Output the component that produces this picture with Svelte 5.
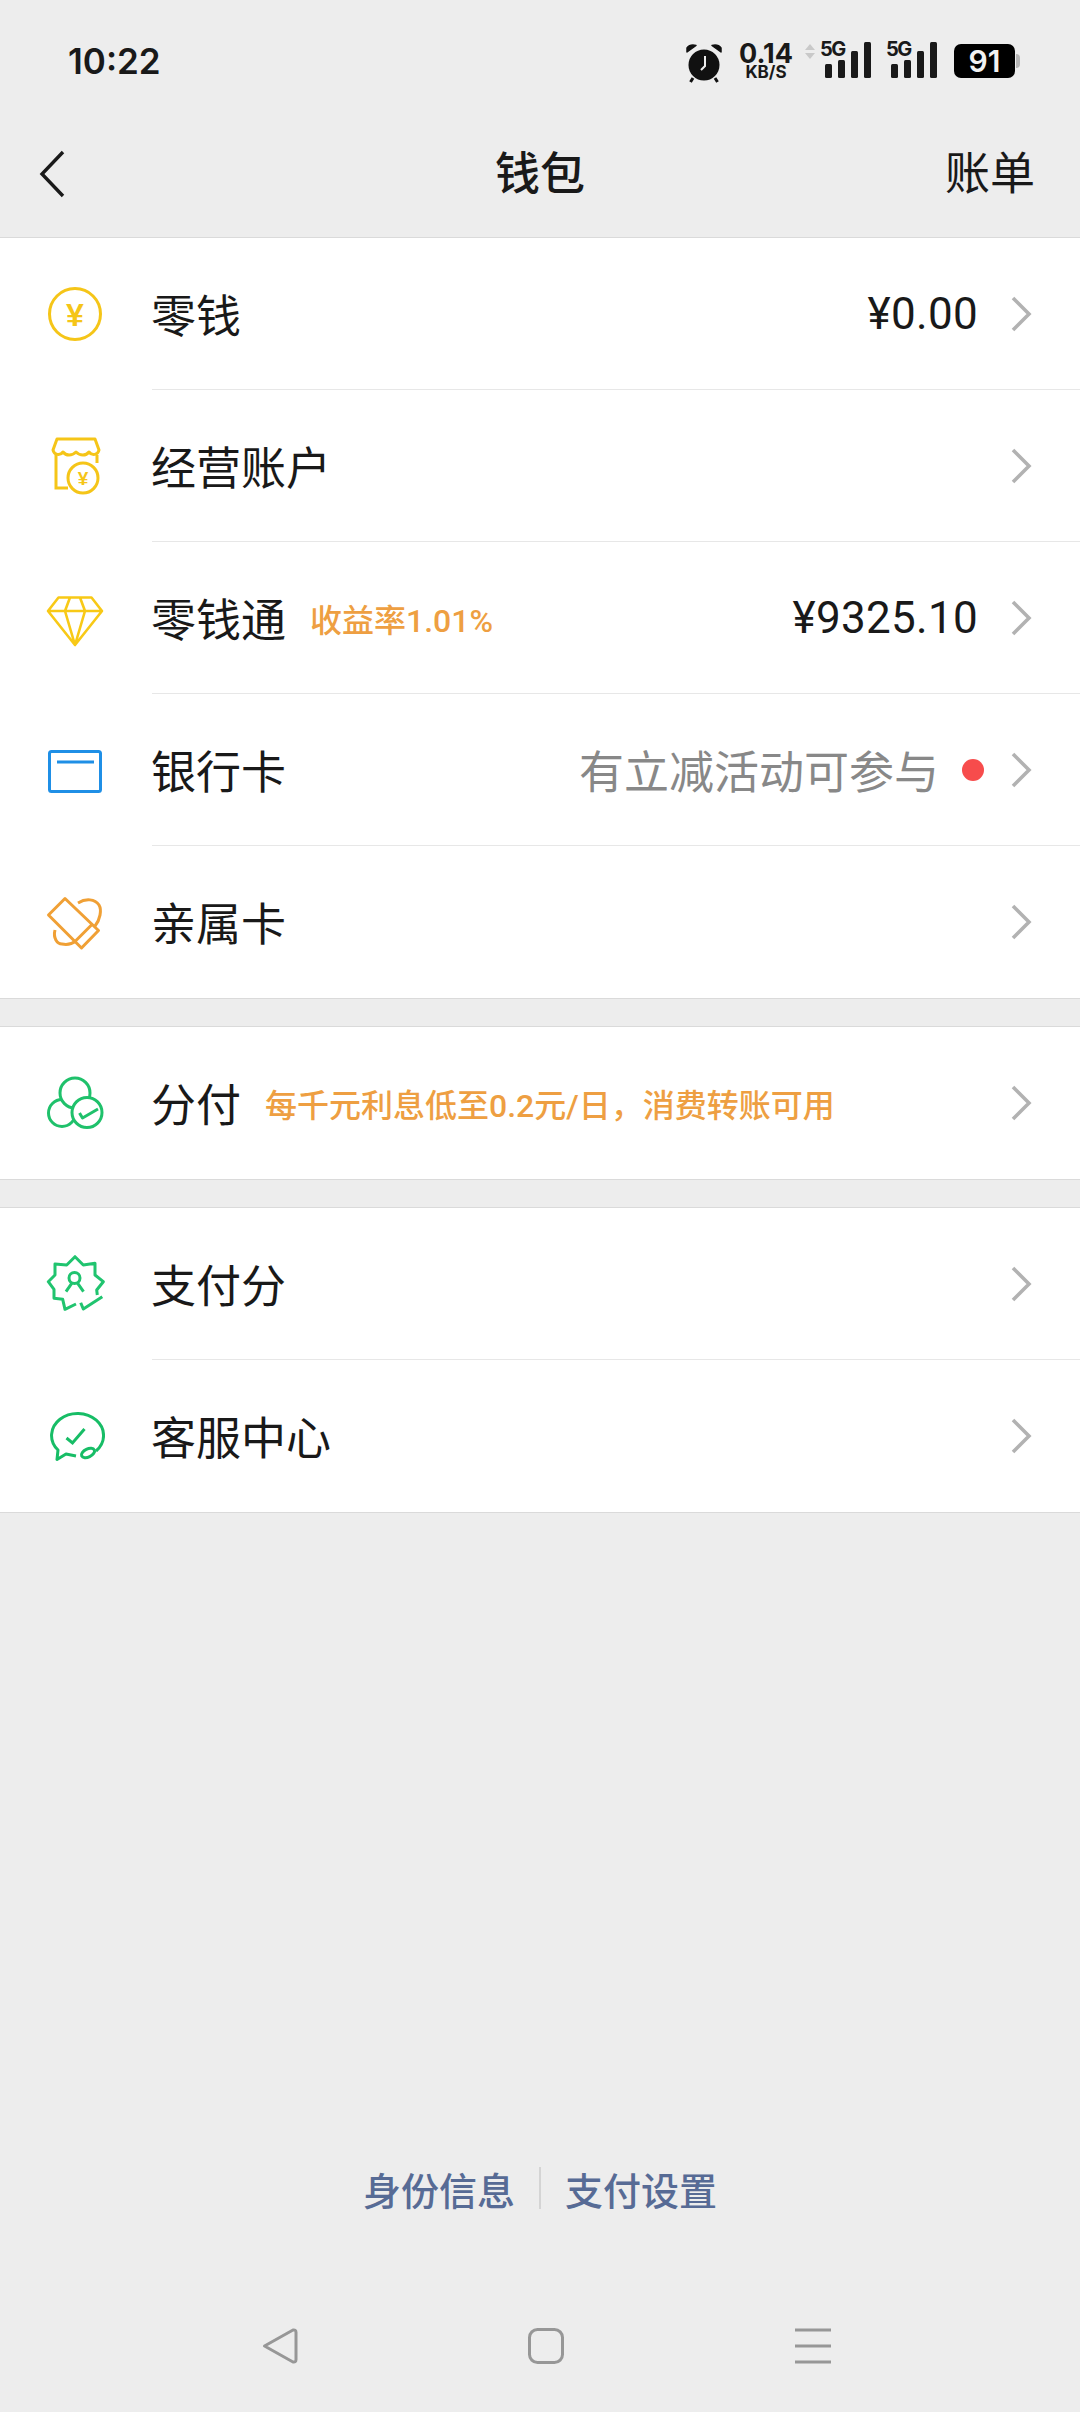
<script>
    const groups = [
        [
            { icon: 'coin', label: '零钱', value: '¥0.00' },
            { icon: 'store', label: '经营账户' },
            { icon: 'gem', label: '零钱通', tag: '收益率1.01%', value: '¥9325.10' },
            { icon: 'card', label: '银行卡', hint: '有立减活动可参与', dot: true },
            { icon: 'family', label: '亲属卡' }
        ],
        [{ icon: 'fenfu', label: '分付', tag: '每千元利息低至0.2元/日，消费转账可用' }],
        [
            { icon: 'badge', label: '支付分' },
            { icon: 'service', label: '客服中心' }
        ]
    ];

    const bars = [
        { h: 14 },
        { h: 18 },
        { h: 27 },
        { h: 36 }
    ];
</script>

<div class="page">
    <div class="status">
        <span class="time">10:22</span>
        <div class="status-right">
            <svg class="alarm" width="38" height="40" viewBox="0 0 38 40">
                <circle cx="19" cy="22" r="15.5" fill="#111" />
                <path d="M2 9 L11 2.5 Q5 1 2 5 Z M36 9 L27 2.5 Q33 1 36 5 Z" fill="#111" stroke="#111" stroke-width="1.5" stroke-linejoin="round" />
                <path d="M8 35 L5.5 39 M30 35 L32.5 39" stroke="#111" stroke-width="3" />
                <path d="M20 13 V23 L16 27" fill="none" stroke="#eee" stroke-width="2" />
            </svg>
            <div class="speed">
                <span class="speed-num">0.14</span>
                <span class="speed-unit">KB/S</span>
            </div>
            <svg class="updown" width="12" height="16" viewBox="0 0 12 16">
                <path d="M6 0 L11 6 H1 Z M6 15 L11 9 H1 Z" fill="#c9c9c9" />
            </svg>
            {#each [0, 1] as sim}
                <div class="signal" class:second={sim === 1}>
                    <span class="five-g">5G</span>
                    <div class="bars">
                        {#each bars as bar}
                            <i style="height: {bar.h}px"></i>
                        {/each}
                    </div>
                </div>
            {/each}
            <div class="battery"><span>91</span></div>
            <i class="battery-nub"></i>
        </div>
    </div>

    <header class="nav">
        <svg class="back" width="28" height="48" viewBox="0 0 28 48">
            <path d="M25 2 L4 24 L25 46" fill="none" stroke="#1a1a1a" stroke-width="3.4" />
        </svg>
        <h1>钱包</h1>
        <span class="nav-action">账单</span>
    </header>

    <main class="list">
        {#each groups as rows}
            <section class="group">
                {#each rows as row}
                    <div class="row">
                        <svg class="icon" width="60" height="60" viewBox="0 0 60 60" fill="none" stroke-width="3">
                            {#if row.icon === 'coin'}
                                <circle cx="30" cy="30" r="25.5" stroke="#f5c518" />
                                <text x="30" y="41.5" text-anchor="middle" class="yen" font-size="32" fill="#f5c518">¥</text>
                            {:else if row.icon === 'store'}
                                <path d="M12 3 H50 L54 14 C53 19 47 20 44 16 C41 20 35 20 31 16 C27 20 21 20 18 16 C15 20 9 19 8 14 Z" stroke="#f5c518" stroke-linejoin="round" />
                                <path d="M11 19 V52 H23 M52 19 V27" stroke="#f5c518" />
                                <circle cx="38" cy="42" r="15" stroke="#f5c518" />
                                <text x="38" y="49" text-anchor="middle" class="yen" font-size="19" fill="#f5c518">¥</text>
                            {:else if row.icon === 'gem'}
                                <path d="M13.5 9.5 H46.5 L57 23 L30 57 L3 23 Z M3 23 H57 M25 9.5 L20 23 L30 57 L40 23 L35 9.5" stroke="#f8c916" stroke-width="2.6" stroke-linejoin="round" />
                            {:else if row.icon === 'card'}
                                <rect x="4.5" y="11.5" width="51" height="40" rx="2" stroke="#1f8fe6" />
                                <path d="M12 22 H49" stroke="#1f8fe6" />
                            {:else if row.icon === 'family'}
                                <path d="M20 6.5 L3.5 23 L36.5 56 L53.5 38.5 Z M30 49.5 L47 32.5" stroke="#f0a035" stroke-linejoin="round" />
                                <path d="M33 11 C41 6 50 7 54 13 C57 18 55 28 50 34 M10 38 C8 46 12 52 17 52 C22 53 27 52 31 49" stroke="#f0a035" />
                            {:else if row.icon === 'fenfu'}
                                <circle cx="17" cy="40" r="13.5" stroke="#1fc16b" />
                                <circle cx="30" cy="20" r="15" stroke="#1fc16b" fill="#fff" />
                                <circle cx="42" cy="39.5" r="15" stroke="#1fc16b" fill="#fff" />
                                <path d="M34.5 40 L37.5 45 L53 36" stroke="#1fc16b" stroke-linejoin="round" />
                            {:else if row.icon === 'badge'}
                                <path d="M52.3 41 L51.7 36 L58.3 27.7 L50 21 L50 9.3 L38.3 11 L30 2.7 L21.7 11 L10 10 L10 21 L3.3 27.7 L9 35.3 L9 44.3 L17.7 45.3 L20 55.3 L31 50" stroke="#20c46f" stroke-linejoin="round" />
                                <circle cx="29.5" cy="24" r="5.5" stroke="#20c46f" />
                                <path d="M21 37.7 L26.7 29.3 M38.5 37.7 L32.7 29.3" stroke="#20c46f" />
                                <path d="M35.7 48.7 L38.3 55 L57.3 42.7" stroke="#20c46f" stroke-linejoin="round" />
                            {:else if row.icon === 'service'}
                                <path d="M31 50 L21 48 L12 53.5 L13 44 A26 22 0 1 1 51 45" stroke="#17bd66" stroke-linejoin="round" />
                                <ellipse cx="43" cy="47" rx="7" ry="4" transform="rotate(-25 43 47)" stroke="#17bd66" />
                                <path d="M21.5 32 L27.5 37 L39.5 23" stroke="#17bd66" />
                            {/if}
                        </svg>
                        <div class="row-body">
                            <span class="label">{row.label}</span>
                            {#if row.tag}
                                <span class="tag">{row.tag}</span>
                            {/if}
                            <span class="spacer"></span>
                            {#if row.hint}
                                <span class="hint">{row.hint}</span>
                            {/if}
                            {#if row.dot}
                                <i class="dot"></i>
                            {/if}
                            {#if row.value}
                                <span class="value">{row.value}</span>
                            {/if}
                            <svg class="chevron" width="22" height="36" viewBox="0 0 22 36">
                                <path d="M3 2 L19 18 L3 34" fill="none" stroke="#b2b2b2" stroke-width="3.6" />
                            </svg>
                        </div>
                    </div>
                {/each}
            </section>
        {/each}
    </main>

    <footer class="links">
        <span>身份信息</span>
        <i class="sep"></i>
        <span>支付设置</span>
    </footer>

    <div class="sysnav">
        <svg width="36" height="36" viewBox="0 0 36 36">
            <path d="M2.5 18 L31 2 Q34 1.5 34 4.5 V31.5 Q34 34.5 31 34 Z" fill="none" stroke="#979797" stroke-width="3" stroke-linejoin="round" />
        </svg>
        <svg width="36" height="36" viewBox="0 0 36 36">
            <rect x="1.5" y="1.5" width="33" height="33" rx="8" fill="none" stroke="#979797" stroke-width="3" />
        </svg>
        <svg width="38" height="36" viewBox="0 0 38 36">
            <path d="M1 2 H37 M1 18 H37 M1 34 H37" stroke="#979797" stroke-width="3" />
        </svg>
    </div>
</div>

<style>
    :global(body) {
        margin: 0;
        background: #ededed;
    }

    .page {
        width: 1080px;
        height: 2412px;
        background: #ededed;
        display: flex;
        flex-direction: column;
        font-family: "Noto Sans CJK SC", "Noto Sans", sans-serif;
        color: #191919;
        overflow: hidden;
    }

    .status {
        height: 122px;
        box-sizing: border-box;
        padding: 41px 60px 0 68px;
        display: flex;
        justify-content: space-between;
        align-items: flex-start;
    }

    .time {
        font-family: Inter, Roboto, sans-serif;
        font-size: 35px;
        font-weight: 600;
        line-height: 40px;
    }

    .status-right {
        display: flex;
        align-items: flex-start;
        font-family: Inter, Roboto, sans-serif;
    }

    .alarm {
        margin-top: 2px;
    }

    .speed {
        display: flex;
        flex-direction: column;
        align-items: center;
        width: 54px;
        margin: 1px 0 0 16px;
        font-weight: 700;
    }

    .speed-num {
        font-size: 27px;
        line-height: 23px;
    }

    .speed-unit {
        font-size: 17px;
        line-height: 15px;
    }

    .updown {
        margin: 3px 0 0 11px;
    }

    .signal {
        width: 51px;
        height: 37px;
        margin-left: 4px;
        position: relative;
    }

    .signal.second {
        margin-left: 15px;
    }

    .five-g {
        position: absolute;
        left: 0;
        top: 0;
        font-size: 20px;
        line-height: 17px;
        font-weight: 700;
        letter-spacing: -1.5px;
    }

    .bars {
        position: absolute;
        right: 0;
        bottom: 0;
        display: flex;
        align-items: flex-end;
        gap: 6px;
    }

    .bars i {
        display: block;
        width: 7px;
        background: #191919;
        border-radius: 1.5px;
    }

    .battery {
        width: 61px;
        height: 34px;
        margin: 3px 0 0 17px;
        background: #000;
        border-radius: 7px;
        display: flex;
        align-items: center;
        justify-content: center;
        color: #f2f2f2;
        font-size: 30px;
        font-weight: 600;
    }

    .battery-nub {
        display: block;
        width: 4px;
        height: 14px;
        margin: 13px 0 0 1px;
        background: #b5b5b5;
        border-radius: 0 4px 4px 0;
    }

    .nav {
        height: 116px;
        box-sizing: border-box;
        padding: 0 45px 12px 38px;
        display: grid;
        grid-template-columns: 1fr auto 1fr;
        align-items: center;
        border-bottom: 1px solid #dadada;
    }

    .nav h1 {
        margin: -5px 0 0;
        padding-left: 7px;
        font-size: 45px;
        font-weight: 500;
        line-height: 60px;
    }

    .nav-action {
        justify-self: end;
        font-size: 45px;
        line-height: 60px;
        margin-top: -5px;
    }

    .list {
        flex: 1;
        display: flex;
        flex-direction: column;
        gap: 27px;
    }

    .group {
        background: #fff;
        border-bottom: 1px solid #dadada;
    }

    .group + .group {
        border-top: 1px solid #dadada;
    }

    .row {
        display: flex;
        height: 152px;
        align-items: center;
    }

    .icon {
        flex: none;
        margin: 0 47px 0 45px;
    }

    .yen {
        font-family: "Liberation Sans", sans-serif;
        font-weight: 700;
        stroke: none;
    }

    .row-body {
        flex: 1;
        height: 100%;
        box-sizing: border-box;
        padding-right: 48px;
        display: flex;
        align-items: center;
        border-bottom: 1px solid #e7e7e7;
    }

    .row:last-child .row-body {
        border-bottom: none;
    }

    .label {
        font-size: 45px;
        font-weight: 400;
        line-height: 60px;
        margin-left: -1px;
    }

    .tag {
        margin-left: 24px;
        color: #ee9f42;
        font-family: Roboto, "Noto Sans CJK SC", sans-serif;
        font-size: 32px;
        font-weight: 500;
    }

    .spacer {
        flex: 1;
    }

    .hint {
        color: #888;
        font-size: 45px;
        line-height: 60px;
    }

    .dot {
        width: 22px;
        height: 22px;
        margin: 0 -6px 0 23px;
        border-radius: 50%;
        background: #f74c4c;
    }

    .value {
        font-family: Roboto, sans-serif;
        font-size: 44px;
        letter-spacing: 0.3px;
    }

    .chevron {
        flex: none;
        margin-left: 32px;
    }

    .links {
        height: 62px;
        margin-bottom: 109px;
        display: flex;
        align-items: center;
        justify-content: center;
        gap: 24px;
        color: #576b95;
        font-size: 38px;
        font-weight: 500;
    }

    .sep {
        width: 2px;
        height: 42px;
        background: #d4d4d4;
    }

    .sysnav {
        height: 84px;
        box-sizing: border-box;
        padding: 0 248px 0 262px;
        display: flex;
        justify-content: space-between;
        align-items: flex-start;
    }
</style>
